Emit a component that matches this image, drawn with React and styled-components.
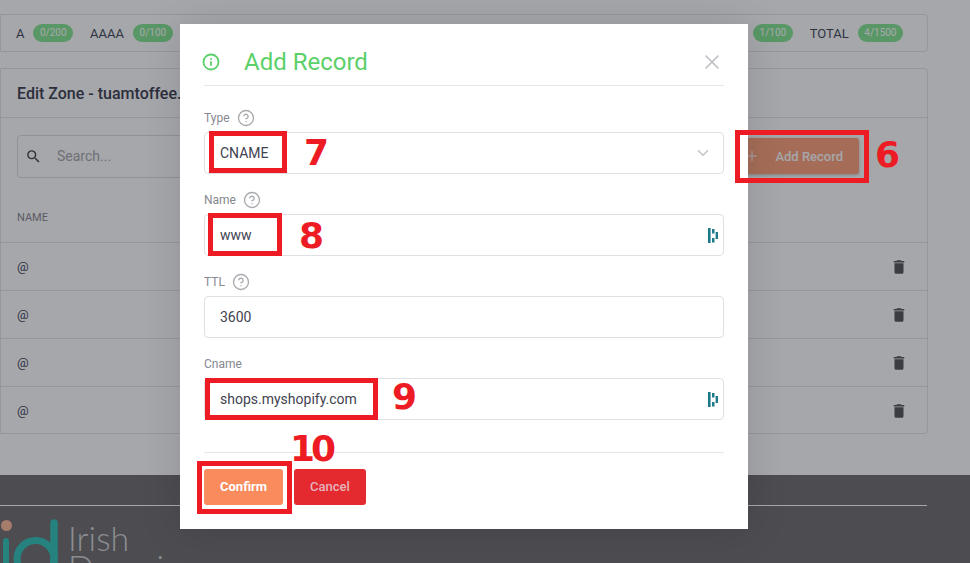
import React from "react";
import styled, { createGlobalStyle } from "styled-components";
import { ChevronDown, CircleHelp, Info, Plus, X } from "lucide-react";
import { MdDelete, MdSearch } from "react-icons/md";

const GlobalStyle = createGlobalStyle`
  html, body {
    margin: 0;
    padding: 0;
    background: #fff;
    font-family: Roboto, "Liberation Sans", sans-serif;
  }
`;

const rows = ["@", "@", "@", "@"];

const fields = [
  { label: "Type", value: "CNAME", help: true, select: true },
  { label: "Name", value: "www", help: true, dash: true },
  { label: "TTL", value: "3600", help: true },
  { label: "Cname", value: "shops.myshopify.com", dash: true },
];

const boxes = [
  { x: 735, y: 130, w: 134, h: 53 },
  { x: 209, y: 131, w: 78, h: 42 },
  { x: 208, y: 213, w: 74, h: 43 },
  { x: 205, y: 378, w: 173, h: 42 },
  { x: 197, y: 461, w: 95, h: 53 },
];

const numbers = [
  { x: 875, y: 133, text: "6" },
  { x: 304, y: 131, text: "7" },
  { x: 299, y: 214, text: "8" },
  { x: 392, y: 375, text: "9" },
  { x: 290, y: 427, text: "10", tight: true },
];

const DashIcon = () => (
  <svg viewBox="0 0 10 15" width="10" height="15">
    <path d="M0 0h2.6v15H0zM4 1h2.5v4.5H4zM4 10h2.5v4.5H4zM7.6 4H10v7H7.6z" fill="#1c7a88" />
  </svg>
);

const App = () => (
  <Page>
    <GlobalStyle />
    <Content>
      <StatsCard>
        <Stat>
          A <Pill>0/200</Pill>
        </Stat>
        <Stat>
          AAAA <Pill>0/100</Pill>
        </Stat>
        <StatsEnd>
          <Pill>1/100</Pill>
          <Stat>
            TOTAL <Pill>4/1500</Pill>
          </Stat>
        </StatsEnd>
      </StatsCard>
      <ZoneCard>
        <ZoneTitle>Edit Zone - tuamtoffee.ie</ZoneTitle>
        <Toolbar>
          <SearchBox>
            <MdSearch size={17} color="#3a3b3f" />
            <span>Search...</span>
          </SearchBox>
          <AddButton>
            <Plus size={16} strokeWidth={1.5} />
            Add Record
          </AddButton>
        </Toolbar>
        <TableHead>NAME</TableHead>
        {rows.map((name, i) => (
          <TableRow key={i}>
            {name}
            <MdDelete size={18} color="#4e4f53" />
          </TableRow>
        ))}
      </ZoneCard>
    </Content>
    <Footer>
      <FooterLine />
      <Logo>
        <svg width="60" height="45" viewBox="0 0 60 45">
          <circle cx="6.5" cy="6.5" r="5.5" fill="#ffb898" />
          <path d="M6 22V45" stroke="#29c1b7" strokeWidth="6" strokeLinecap="round" fill="none" />
          <circle cx="35.5" cy="40" r="18.5" fill="none" stroke="#29c1b7" strokeWidth="7" />
          <path d="M54 4V45" stroke="#29c1b7" strokeWidth="7.5" strokeLinecap="round" fill="none" />
        </svg>
        <LogoText>
          Irish
          <br />
          Domains
        </LogoText>
      </Logo>
    </Footer>
    <Backdrop />
    <Modal>
      <ModalHeader>
        <InfoIcon size={18} strokeWidth={2.4} color="#5cd068" />
        <ModalTitle>Add Record</ModalTitle>
        <CloseIcon>
          <X size={24} strokeWidth={1.6} />
        </CloseIcon>
      </ModalHeader>
      {fields.map((f) => (
        <Field key={f.label}>
          <Label>
            {f.label}
            {f.help && <CircleHelp size={18} strokeWidth={1.8} color="#a9abaf" />}
          </Label>
          <Input>
            {f.value}
            {f.select && <SelectArrow size={18} strokeWidth={2.2} color="#c3c5ca" />}
            {f.dash && <DashIcon />}
          </Input>
        </Field>
      ))}
      <ModalFooter>
        <ActionButton $bg="#f98b5d" $color="#fff" $weight={700}>
          Confirm
        </ActionButton>
        <ActionButton $bg="#e4292f" $color="#e6b3bb" $weight={500}>
          Cancel
        </ActionButton>
      </ModalFooter>
    </Modal>
    {boxes.map((b, i) => (
      <MarkBox key={i} $x={b.x} $y={b.y} $w={b.w} $h={b.h} />
    ))}
    {numbers.map((n) => (
      <MarkNumber key={n.text} $x={n.x} $y={n.y} $tight={n.tight}>
        {n.text}
      </MarkNumber>
    ))}
  </Page>
);

export default App;

const Page = styled.div`
  position: relative;
  width: 970px;
  height: 563px;
  overflow: hidden;
  display: flex;
  flex-direction: column;
`;

const Content = styled.main`
  flex: none;
  height: 475px;
  padding: 14px 42px 0 0;
  box-sizing: border-box;
  display: flex;
  flex-direction: column;
  gap: 16px;
`;

const StatsCard = styled.section`
  flex: none;
  height: 38px;
  box-sizing: border-box;
  border: 1px solid #e3e4e7;
  border-radius: 0 4px 4px 0;
  display: flex;
  align-items: center;
  gap: 17px;
  padding: 0 24px 0 15px;
`;

const Stat = styled.div`
  display: flex;
  align-items: center;
  gap: 9px;
  font-size: 13px;
  font-weight: 400;
  color: #3a3f55;
`;

const StatsEnd = styled.div`
  margin-left: auto;
  display: flex;
  align-items: center;
  gap: 17px;
`;

const Pill = styled.span`
  height: 18px;
  padding: 0 6.5px;
  border-radius: 9px;
  background: #7fe58e;
  color: #fff;
  font-size: 10px;
  font-weight: 400;
  line-height: 18px;
`;

const ZoneCard = styled.section`
  flex: none;
  border: 1px solid #e3e4e7;
  border-radius: 0 4px 4px 0;
  box-sizing: border-box;
  height: 366px;
`;

const ZoneTitle = styled.h2`
  margin: 0;
  height: 49px;
  box-sizing: border-box;
  padding: 0 16px;
  line-height: 50px;
  font-size: 16px;
  font-weight: 500;
  color: #33374a;
  border-bottom: 1px solid #e3e4e7;
`;

const Toolbar = styled.div`
  height: 80px;
  padding: 17px 68px 0 16px;
  box-sizing: border-box;
  display: flex;
  justify-content: space-between;
  align-items: flex-start;
`;

const SearchBox = styled.div`
  width: 300px;
  height: 43px;
  box-sizing: border-box;
  border: 1px solid #dcdde1;
  border-radius: 4px;
  padding: 0 7px;
  display: flex;
  align-items: center;
  gap: 15px;
  font-size: 14px;
  color: #a1a3a8;

  span {
    margin-top: -2px;
  }
`;

const AddButton = styled.button`
  width: 240px;
  height: 36px;
  margin-top: 3px;
  border: 0;
  border-radius: 3px;
  background: #fe9e76;
  color: #fff;
  box-shadow: 0 1px 3px rgba(0, 0, 0, 0.25);
  font: 500 13px Roboto, sans-serif;
  display: flex;
  align-items: center;
  justify-content: flex-end;
  gap: 15px;
  padding: 0 16px;
`;

const TableHead = styled.div`
  height: 45px;
  padding: 0 16px;
  border-bottom: 1px solid #e3e4e7;
  box-sizing: border-box;
  font-size: 11px;
  font-weight: 400;
  line-height: 40px;
  color: #7f828a;
`;

const TableRow = styled.div`
  height: 48px;
  box-sizing: border-box;
  padding: 0 19px 0 16px;
  border-bottom: 1px solid #e3e4e7;
  display: flex;
  align-items: center;
  justify-content: space-between;
  font-size: 13px;
  color: #3a3f55;

  &:last-child {
    border-bottom-color: transparent;
  }
`;

const Footer = styled.footer`
  flex: 1;
  min-height: 0;
  background: #69686b;
  padding-top: 30px;
`;

const FooterLine = styled.div`
  width: 927px;
  height: 1px;
  background: #fff;
`;

const Logo = styled.div`
  display: flex;
  align-items: flex-start;
  gap: 8px;
  margin-top: 13px;
`;

const LogoText = styled.div`
  font-family: Lato, sans-serif;
  font-weight: 300;
  font-size: 34px;
  line-height: 29px;
  color: #d3d3d5;
  padding-top: 4px;
`;

const Backdrop = styled.div`
  position: absolute;
  inset: 0;
  background: rgba(33, 36, 42, 0.4);
`;

const Modal = styled.div`
  position: absolute;
  left: 180px;
  top: 24px;
  width: 568px;
  height: 505px;
  box-sizing: border-box;
  padding: 0 24px;
  background: #fff;
  box-shadow: 0 0 40px rgba(0, 0, 0, 0.12);
`;

const ModalHeader = styled.div`
  height: 62px;
  box-sizing: border-box;
  border-bottom: 1px solid #e5e6ea;
  padding-top: 15px;
  display: flex;
  align-items: center;
  gap: 24px;
  margin-bottom: 23px;
`;

const InfoIcon = styled(Info)`
  margin-left: -2px;
`;

const ModalTitle = styled.h1`
  margin: 0;
  font-size: 24px;
  font-weight: 400;
  color: #5cd068;
`;

const CloseIcon = styled.span`
  margin-left: auto;
  display: flex;
  color: #bcbec4;
`;

const Field = styled.div`
  margin-bottom: 17px;
`;

const Label = styled.div`
  height: 18px;
  margin-bottom: 5px;
  display: flex;
  align-items: center;
  gap: 7px;
  font-size: 12px;
  color: #85888f;
`;

const Input = styled.div`
  width: 520px;
  height: 42px;
  box-sizing: border-box;
  border: 1px solid #dfe0e4;
  border-radius: 4px;
  padding: 0 5px 0 15px;
  display: flex;
  align-items: center;
  justify-content: space-between;
  font-size: 14px;
  color: #41434f;
`;

const SelectArrow = styled(ChevronDown)`
  margin-right: 6px;
`;

const ModalFooter = styled.div`
  margin-top: 32px;
  padding-top: 16px;
  border-top: 1px solid #e5e6ea;
  display: flex;
  gap: 11px;
`;

const ActionButton = styled.button`
  height: 36px;
  padding: 0 16px 2px;
  border: 0;
  border-radius: 3px;
  background: ${(p) => p.$bg};
  color: ${(p) => p.$color};
  font: ${(p) => p.$weight} 13px Roboto, sans-serif;
`;

const MarkBox = styled.div`
  position: absolute;
  left: ${(p) => p.$x}px;
  top: ${(p) => p.$y}px;
  width: ${(p) => p.$w}px;
  height: ${(p) => p.$h}px;
  box-sizing: border-box;
  border: 5px solid #ed1c24;
`;

const MarkNumber = styled.div`
  position: absolute;
  left: ${(p) => p.$x}px;
  top: ${(p) => p.$y}px;
  font: 700 36px/44px "DejaVu Sans", sans-serif;
  letter-spacing: ${(p) => (p.$tight ? "-4px" : "0")};
  color: #ed1c24;
`;
